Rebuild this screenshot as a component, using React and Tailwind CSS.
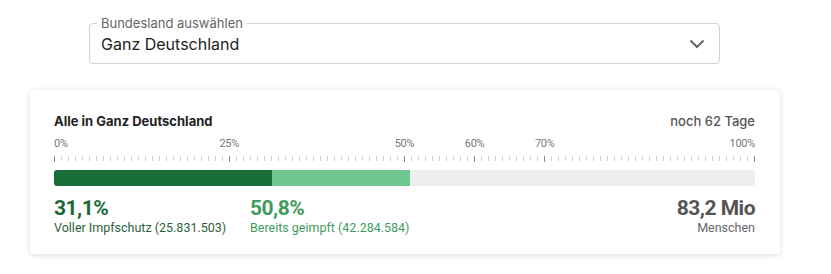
import React from "react";

const ticks = Array.from({ length: 101 }, (_, i) => i);
const major = new Set([0, 25, 50, 60, 70, 100]);
const labels = [0, 25, 50, 60, 70, 100];

export default function App() {
  return (
    <div className="w-[831px] h-[274px] bg-white overflow-hidden font-['Inter',sans-serif]">
      {/* select */}
      <div className="pt-[23px] pl-[89px]">
        <div className="relative w-[631px] h-[41px] rounded-[4px] border border-[#d2d2d2] flex items-center pl-[11px] pr-[13px]">
          <span className="absolute -top-[9px] left-[7px] bg-white px-[4px] text-[13px] leading-[16px] text-[#666]">
            Bundesland auswählen
          </span>
          <span className="flex-1 text-[16px] text-[#222] leading-[20px] mt-[1px]">Ganz Deutschland</span>
          <svg width="16" height="10" viewBox="0 0 16 10" className="mr-[1px] mt-[1px]">
            <path d="M1.5 1.5 L8 8 L14.5 1.5" fill="none" stroke="#666" strokeWidth="2" />
          </svg>
        </div>
      </div>

      {/* card */}
      <div className="ml-[30px] mt-[26px] w-[750px] h-[164px] rounded-[4px] bg-white shadow-[0_1px_6px_rgba(0,0,0,0.14)] pt-[24px] pl-[24px] pr-[25px]">
        <div className="flex justify-between items-center h-[16px]">
          <span className="text-[13px] font-bold text-[#222]">Alle in Ganz Deutschland</span>
          <span className="text-[13px] font-medium text-[#555]">noch 62 Tage</span>
        </div>
        <div className="relative h-[14px] mt-[7px] font-['Roboto',sans-serif] text-[11px] leading-[14px] text-[#777] tracking-[-0.3px]">
          {labels.map((l) => (
            <span
              key={l}
              className="absolute top-0"
              style={
                l === 0
                  ? { left: 0 }
                  : l === 100
                  ? { right: 0 }
                  : { left: `${l}%`, transform: "translateX(-50%)" }
              }
            >
              {l}%
            </span>
          ))}
        </div>
        <div className="flex justify-between items-start h-[6px] mt-[5px]">
          {ticks.map((t) => (
            <div
              key={t}
              className={major.has(t) ? "w-px h-[6px] bg-[#888]" : "w-px h-[5px] bg-[#d0d0d0]"}
            />
          ))}
        </div>
        <div className="mt-[8px] h-[16px] rounded-[3px] bg-[#efefef] flex overflow-hidden">
          <div className="h-full bg-[#176f37]" style={{ width: "31.1%" }} />
          <div className="h-full bg-[#6dc78e]" style={{ width: "19.7%" }} />
        </div>
        <div className="flex items-start mt-[10px] font-['Roboto',sans-serif]">
          <div className="flex flex-col w-[196px]">
            <span className="text-[21px] leading-[24px] font-bold text-[#1b6b36] tracking-[-0.5px]">31,1%</span>
            <span className="text-[12.5px] leading-[15px] text-[#2e5f3c]">Voller Impfschutz (25.831.503)</span>
          </div>
          <div className="flex flex-col">
            <span className="text-[21px] leading-[24px] font-bold text-[#3f9b5d] tracking-[-0.5px]">50,8%</span>
            <span className="text-[12.5px] leading-[15px] text-[#3f9b5d]">Bereits geimpft (42.284.584)</span>
          </div>
          <div className="flex flex-col items-end ml-auto">
            <span className="text-[21px] leading-[24px] font-bold text-[#555] tracking-[-0.5px]">83,2 Mio</span>
            <span className="text-[12.5px] leading-[15px] text-[#666]">Menschen</span>
          </div>
        </div>
      </div>
    </div>
  );
}
